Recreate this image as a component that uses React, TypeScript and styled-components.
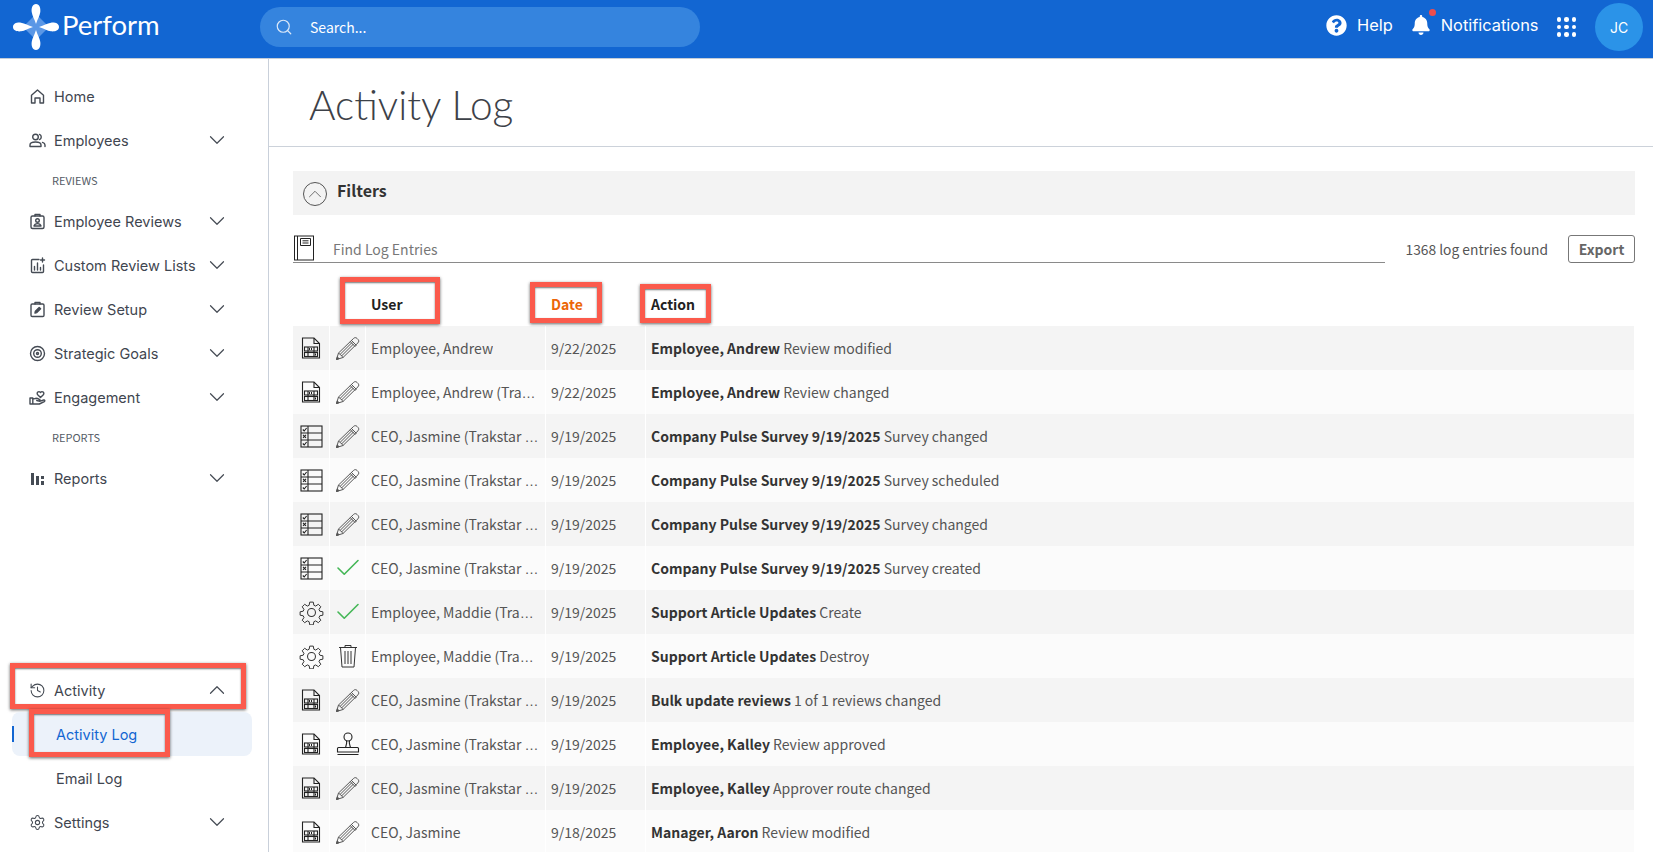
import React from "react";
import styled, { createGlobalStyle } from "styled-components";
import { ChevronDown, ChevronUp, History, Search, Settings, Check } from "lucide-react";
import { FaBell, FaQuestionCircle } from "react-icons/fa";

const GlobalStyle = createGlobalStyle`
  html, body {
    margin: 0;
    padding: 0;
    height: 852px;
    overflow: hidden;
    background: #fff;
  }
  * { box-sizing: border-box; }
`;

const BODY_FONT = `"Noto Sans CJK SC", "Open Sans", sans-serif`;
const NAV_FONT = `Inter, "Noto Sans", sans-serif`;

const Page = styled.div`
  width: 1653px;
  height: 852px;
  display: flex;
  flex-direction: column;
  overflow: hidden;
`;

const TopBar = styled.header`
  height: 59px;
  flex: none;
  background: #1266d2;
  border-bottom: 1px solid #c3ccd8;
  display: flex;
  align-items: center;
  padding: 0 10px 4px 13px;
  color: #fff;
  font-family: ${NAV_FONT};
`;

const Logo = styled.div`
  display: flex;
  align-items: center;
  width: 247px;
  gap: 3px;
`;

const LogoText = styled.span`
  font-family: Lato, sans-serif;
  font-size: 27.5px;
  font-weight: 400;
  margin-top: -5px;
`;

const SearchBox = styled.div`
  width: 440px;
  height: 40px;
  border-radius: 20px;
  background: #3584de;
  display: flex;
  align-items: center;
  gap: 17px;
  padding: 0 15px;
  font-family: ${BODY_FONT};
  font-size: 14px;
`;

const TopActions = styled.div`
  margin-left: auto;
  display: flex;
  align-items: center;
`;

const TopLink = styled.div`
  display: flex;
  align-items: center;
  gap: 10px;
  font-size: 16.4px;
  margin-right: 18px;
  margin-top: -4px;
`;

const BellWrap = styled.span`
  position: relative;
  display: flex;
  &::after {
    content: "";
    position: absolute;
    top: -6px;
    right: -5px;
    width: 7px;
    height: 7px;
    border-radius: 50%;
    background: #ee4d4d;
  }
`;

const Waffle = styled.div`
  display: grid;
  grid-template-columns: repeat(3, 4.5px);
  gap: 3px;
  margin-right: 19px;
`;

const Dot = styled.span`
  width: 4.5px;
  height: 4.5px;
  border-radius: 50%;
  background: #fff;
`;

const Avatar = styled.div`
  width: 48px;
  height: 48px;
  border-radius: 50%;
  background: #2b93e8;
  display: flex;
  align-items: center;
  justify-content: center;
  font-size: 14px;
`;

const Body = styled.div`
  flex: 1;
  display: flex;
  min-height: 0;
`;

const Sidebar = styled.nav`
  width: 269px;
  flex: none;
  border-right: 1px solid #c9d0da;
  display: flex;
  flex-direction: column;
  justify-content: space-between;
  padding: 15px 0 8px 12px;
  font-family: ${NAV_FONT};
`;

const NavGroup = styled.div`
  display: flex;
  flex-direction: column;
`;

const NavItem = styled.div`
  position: relative;
  height: 44px;
  width: 240px;
  display: flex;
  align-items: center;
  gap: 8px;
  padding: 0 22px 0 17px;
  font-size: 14.5px;
  color: #3f4650;
`;

const NavLabel = styled.span`
  flex: 1;
  white-space: nowrap;
`;

const NavSection = styled.div`
  height: 37px;
  padding: 10px 0 0 40px;
  font-family: ${BODY_FONT};
  font-size: 11px;
  color: #555c66;
`;

const SubItem = styled.div<{ $active?: boolean }>`
  position: relative;
  height: 44px;
  width: 240px;
  display: flex;
  align-items: center;
  padding-left: 44px;
  font-size: 14.5px;
  border-radius: 8px;
  color: ${(p) => (p.$active ? "#1266d2" : "#3f4650")};
  background: ${(p) => (p.$active ? "#ecf2fa" : "transparent")};
`;

const ActiveBar = styled.span`
  position: absolute;
  left: 0;
  top: 14px;
  width: 2px;
  height: 16px;
  background: #1266d2;
`;

const Callout = styled.span`
  position: absolute;
  border: 5px solid #fb5a4c;
  box-shadow: 0 1px 3px rgba(0, 0, 0, 0.6), inset 0 1px 2px rgba(0, 0, 0, 0.55);
  pointer-events: none;
`;

const ActivityCallout = styled(Callout)`
  left: -2px;
  top: -5px;
  width: 236px;
  height: 46px;
`;

const ActivityLogCallout = styled(Callout)`
  left: 17px;
  top: -3px;
  width: 141px;
  height: 48px;
`;

const UserCallout = styled(Callout)`
  left: -31px;
  top: -17px;
  width: 100px;
  height: 47px;
`;

const DateCallout = styled(Callout)`
  left: -21px;
  top: -12px;
  width: 72px;
  height: 41px;
`;

const ActionCallout = styled(Callout)`
  left: -11px;
  top: -10px;
  width: 71px;
  height: 39px;
`;

const Main = styled.main`
  flex: 1;
  min-width: 0;
  font-family: ${BODY_FONT};
  color: #444;
`;

const TitleBar = styled.div`
  height: 88px;
  border-bottom: 1px solid #ccd2da;
  padding: 19px 0 0 40px;
`;

const Title = styled.h1`
  margin: 0;
  font-family: Lato, sans-serif;
  font-weight: 300;
  font-size: 40.6px;
  line-height: 54px;
  color: #3d4148;
`;

const Content = styled.div`
  padding: 24px 18px 0 24px;
`;

const FiltersBar = styled.div`
  height: 44px;
  background: #f3f3f3;
  display: flex;
  align-items: center;
  gap: 10px;
  padding: 0 10px;
  font-weight: 700;
  font-size: 16px;
  color: #333;
`;

const FiltersLabel = styled.span`
  margin-top: -6px;
`;

const CircleToggle = styled.span`
  width: 24px;
  height: 24px;
  margin-top: 2px;
  border: 1px solid #555;
  border-radius: 50%;
  display: flex;
  align-items: center;
  justify-content: center;
`;

const FindRow = styled.div`
  margin-top: 20px;
  height: 28px;
  display: flex;
  align-items: stretch;
`;

const FindField = styled.div`
  flex: 1;
  display: flex;
  border-bottom: 1px solid #8a8a8a;
`;

const FindText = styled.span`
  margin-left: 18px;
  padding-top: 4px;
  font-size: 14px;
  line-height: 20px;
  color: #777;
`;

const FoundCount = styled.span`
  margin-left: 20px;
  padding-top: 1px;
  font-size: 13.8px;
  line-height: 26px;
  color: #555;
`;

const ExportButton = styled.button`
  margin-left: 20px;
  width: 67px;
  height: 28px;
  background: #fff;
  border: 1px solid #777;
  border-radius: 3px;
  font-family: ${BODY_FONT};
  font-weight: 700;
  font-size: 14px;
  color: #666;
  padding: 0;
`;

const columns = "37px 36px 180px 100px 1fr";

const HeadRow = styled.div`
  display: grid;
  grid-template-columns: ${columns};
  height: 63px;
  padding-top: 31px;
  font-weight: 700;
  font-size: 14px;
  line-height: 20px;
`;

const HeadCell = styled.div<{ $sorted?: boolean; $col: number }>`
  grid-column: ${(p) => p.$col};
  padding-left: 5px;
  color: ${(p) => (p.$sorted ? "#ec6608" : "#222")};
`;

const HeadLabel = styled.span`
  position: relative;
  display: inline-block;
`;

const LogRow = styled.div<{ $odd: boolean }>`
  display: grid;
  grid-template-columns: ${columns};
  height: 44px;
  background: ${(p) => (p.$odd ? "#f4f4f4" : "#fbfbfb")};
`;

const IconCell = styled.div`
  display: flex;
  align-items: center;
  justify-content: center;
  border-right: 1px solid #fff;
`;

const TextCell = styled.div`
  display: flex;
  align-items: center;
  padding: 0 5px;
  min-width: 0;
  font-size: 14px;
  color: #555;
  border-right: 1px solid #fff;
`;

const Clip = styled.span`
  overflow: hidden;
  white-space: nowrap;
`;

const Dots = styled.span`
  font-family: "Liberation Sans", sans-serif;
`;

const Strong = styled.b`
  font-weight: 700;
  color: #333;
`;

/* drawings */
const Petal = ({ angle }: { angle: number }) => (
  <path
    d="M23 0C26.500 0 27.800 4 27.300 8C26.800 12 24.500 15 23 20C21.500 15 19.200 12 18.700 8C18.200 4 19.500 0 23 0Z"
    transform={`rotate(${angle} 23 23)`}
    fill="#fff"
  />
);

const LogoMark = () => (
  <svg width="46" height="46" viewBox="0 0 46 46">
    <path d="M23 10 36 23 23 36 10 23Z" fill="#5a97e6" />
    <Petal angle={0} />
    <Petal angle={90} />
    <Petal angle={180} />
    <Petal angle={270} />
  </svg>
);

type NavIconName = "home" | "people" | "badge" | "chart" | "edit" | "target" | "hand" | "bars";

const NavIcon = ({ name }: { name: NavIconName }) => (
  <svg width="17" height="17" viewBox="0 0 17 17" fill="none" stroke="#454b54" strokeWidth="1.4" strokeLinecap="round" strokeLinejoin="round">
    {name === "home" && <path d="M2.500 7.200 8.500 2l6 5.200V15h-3.500v-5H6v5H2.500z" />}
    {name === "people" && (
      <>
        <circle cx="6.500" cy="5" r="2.800" />
        <path d="M1 14.500v-1.500c0-2 2.200-3 5.500-3s5.500 1 5.500 3v1.500z" />
        <path d="M10.500 2.400a2.800 2.800 0 0 1 0 5.200M13.500 10.400c1.600.5 2.500 1.400 2.500 2.600v1.500" />
      </>
    )}
    {name === "badge" && (
      <>
        <rect x="2" y="3" width="13" height="12.500" rx="1.500" />
        <path d="M6 3V1.500h5V3" />
        <circle cx="8.500" cy="7.500" r="1.800" />
        <path d="M5 13c.4-1.600 1.800-2.400 3.500-2.400S11.600 11.400 12 13z" />
      </>
    )}
    {name === "chart" && (
      <>
        <path d="M10 2.500H3.500a1 1 0 0 0-1 1v11a1 1 0 0 0 1 1h10a1 1 0 0 0 1-1V8" />
        <path d="M5.500 13V9.500M8.500 13V6M11.500 13v-2.500M13.500 1v4M11.500 3h4" />
      </>
    )}
    {name === "edit" && (
      <>
        <rect x="2" y="3" width="13" height="12.500" rx="1.200" />
        <path d="M6 3V1.500h5V3" />
        <path d="m6 12 .4-1.800 3.800-3.800 1.400 1.400-3.800 3.800z" fill="#454b54" />
      </>
    )}
    {name === "target" && (
      <>
        <circle cx="8.500" cy="8.500" r="7" />
        <circle cx="8.500" cy="8.500" r="3.800" />
        <circle cx="8.500" cy="8.500" r="1" />
      </>
    )}
    {name === "hand" && (
      <>
        <path d="M1 9h2.800v6H1zM3.800 10.200l3-.9c1 0 3.400 1 3.900 1.300.8.500.2 1.700-.8 1.400l-2.200-.5M10.500 12.400l4.200-1.400c1.200-.2 1.500 1 .6 1.600l-5 2.400H3.800" />
        <path d="M11.500 8.500 8.700 5.700c-1.700-2 1-4.200 2.800-2.200 1.800-2 4.500.2 2.800 2.200z" />
      </>
    )}
    {name === "bars" && (
      <g stroke="none" fill="#454b54">
        <rect x="2" y="3" width="3" height="12" />
        <rect x="7" y="6" width="3" height="9" />
        <rect x="12" y="6" width="3" height="3" />
        <rect x="12" y="11" width="3" height="4" />
      </g>
    )}
  </svg>
);

const BookIcon = () => (
  <svg width="22" height="26" viewBox="0 0 22 26" fill="none" stroke="#222" strokeWidth="1">
    <rect x="1.500" y="1" width="19" height="24" />
    <path d="M4.500 1v24M7.500 3.500h10v7h-10zM9.500 5.800h6M9.500 8h6" />
  </svg>
);

const DocIcon = () => (
  <svg width="20" height="22" viewBox="0 0 20 22" fill="none" stroke="#222" strokeWidth="1.100">
    <path d="M1.500 1h11.500l5.500 5.500V21H1.500z" />
    <path d="M13 1v5.500h5.500" />
    <rect x="3.500" y="10" width="13" height="4" />
    <rect x="3.500" y="15.500" width="13" height="4" />
    <path d="M7 10v9.500M13 10v9.500" />
    <path d="M8 12h4M14 17.500h2" strokeWidth="2" strokeDasharray="1 1" />
  </svg>
);

const ChecklistIcon = () => (
  <svg width="23" height="23" viewBox="0 0 23 23" fill="none" stroke="#222" strokeWidth="1.100">
    <rect x="1" y="1" width="21" height="21" />
    <path d="M1 8h21M1 15h21M8 1v21" />
    <path d="m2.800 4.500 1.400 1.500 2.400-3M2.800 18.500l1.400 1.500 2.400-3M3 9.800l3 3M6 9.800l-3 3" />
  </svg>
);

const GearIcon = () => (
  <svg width="25" height="25" viewBox="0 0 24 24" fill="none" stroke="#333" strokeWidth="1">
    <circle cx="12" cy="12" r="3.800" />
    <path d="M10.200 1.500h3.600l.6 3.200 1.800.8 2.700-1.800 2.500 2.500-1.800 2.700.8 1.800 3.100.6v3.400l-3.100.6-.8 1.800 1.800 2.700-2.500 2.500-2.700-1.800-1.800.8-.6 3.200h-3.600l-.6-3.200-1.800-.8-2.700 1.800-2.500-2.500 1.800-2.700-.8-1.800-3.100-.6v-3.400l3.100-.6.800-1.800-1.800-2.700 2.500-2.500 2.700 1.800 1.800-.8z" transform="translate(.6 .6) scale(.95)" />
  </svg>
);

const PencilIcon = () => (
  <svg width="25" height="25" viewBox="0 0 25 25" fill="none" stroke="#555" strokeWidth="1">
    <path d="M18.600 2.400c1-1 2.400-1 3.400 0l1 1c1 1 1 2.400 0 3.400L8 21.500 1.500 23.500l2-6.500z" />
    <path d="M16.500 4.500l5 5M15.300 5.700l5 5" />
    <path d="M5 18.500 17 6.500M6.500 20 18.500 8" />
    <path d="M3.500 17c1 .5 3.500 3 4.500 4.500" />
    <path d="M1.500 23.500l.8-2.600 1.800 1.800z" fill="#555" />
  </svg>
);

const TrashIcon = () => (
  <svg width="20" height="24" viewBox="0 0 20 24" fill="none" stroke="#333" strokeWidth="1">
    <path d="M1 3.500h18M7 3.500V1.500h6v2M2.500 3.500 4 23h12l1.500-19.500" />
    <path d="M7 7v13M10 7v13M13 7v13" />
  </svg>
);

const StampIcon = () => (
  <svg width="24" height="24" viewBox="0 0 24 24" fill="none" stroke="#222" strokeWidth="1.100">
    <circle cx="12" cy="5" r="4" />
    <path d="M10.500 8.700c.8 2-.2 4.300-1 6.800h5c-.8-2.500-1.800-4.800-1-6.800" />
    <path d="M2.500 15.500h19c.5 0 1 .5 1 1V20h-21v-3.500c0-.5.500-1 1-1zM1.500 22.500h21" />
  </svg>
);

type EntityIcon = "doc" | "list" | "gear";
type ActionIcon = "edit" | "check" | "trash" | "stamp";

const entityIcons = { doc: <DocIcon />, list: <ChecklistIcon />, gear: <GearIcon /> };
const actionIcons = {
  edit: <PencilIcon />,
  check: <Check size={30} strokeWidth={1.3} color="#45b757" />,
  trash: <TrashIcon />,
  stamp: <StampIcon />,
};

type LogEntry = {
  entity: EntityIcon;
  action: ActionIcon;
  user: string;
  cut?: boolean;
  date: string;
  subject: string;
  detail: string;
};

const jasmine = { user: "CEO, Jasmine (Trakstar ", cut: true };
const maddie = { user: "Employee, Maddie (Tra", cut: true };
const pulse = "Company Pulse Survey 9/19/2025";

const entries: LogEntry[] = [
  { entity: "doc", action: "edit", user: "Employee, Andrew", date: "9/22/2025", subject: "Employee, Andrew", detail: "Review modified" },
  { entity: "doc", action: "edit", user: "Employee, Andrew (Tra", cut: true, date: "9/22/2025", subject: "Employee, Andrew", detail: "Review changed" },
  { entity: "list", action: "edit", ...jasmine, date: "9/19/2025", subject: pulse, detail: "Survey changed" },
  { entity: "list", action: "edit", ...jasmine, date: "9/19/2025", subject: pulse, detail: "Survey scheduled" },
  { entity: "list", action: "edit", ...jasmine, date: "9/19/2025", subject: pulse, detail: "Survey changed" },
  { entity: "list", action: "check", ...jasmine, date: "9/19/2025", subject: pulse, detail: "Survey created" },
  { entity: "gear", action: "check", ...maddie, date: "9/19/2025", subject: "Support Article Updates", detail: "Create" },
  { entity: "gear", action: "trash", ...maddie, date: "9/19/2025", subject: "Support Article Updates", detail: "Destroy" },
  { entity: "doc", action: "edit", ...jasmine, date: "9/19/2025", subject: "Bulk update reviews", detail: "1 of 1 reviews changed" },
  { entity: "doc", action: "stamp", ...jasmine, date: "9/19/2025", subject: "Employee, Kalley", detail: "Review approved" },
  { entity: "doc", action: "edit", ...jasmine, date: "9/19/2025", subject: "Employee, Kalley", detail: "Approver route changed" },
  { entity: "doc", action: "edit", user: "CEO, Jasmine", date: "9/18/2025", subject: "Manager, Aaron", detail: "Review modified" },
];

const NavRow = ({ icon, label }: { icon: NavIconName; label: string }) => (
  <NavItem>
    <NavIcon name={icon} />
    <NavLabel>{label}</NavLabel>
    {icon !== "home" && <ChevronDown size={26} strokeWidth={1.1} color="#454b54" />}
  </NavItem>
);

const App = () => {
  return (
    <Page>
      <GlobalStyle />
      <TopBar>
        <Logo>
          <LogoMark />
          <LogoText>Perform</LogoText>
        </Logo>
        <SearchBox>
          <Search size={18} strokeWidth={1.6} color="#dbe8f8" />
          Search...
        </SearchBox>
        <TopActions>
          <TopLink>
            <FaQuestionCircle size={21} />
            Help
          </TopLink>
          <TopLink>
            <BellWrap>
              <FaBell size={20} />
            </BellWrap>
            Notifications
          </TopLink>
          <Waffle>
            {Array.from({ length: 9 }).map((_, i) => (
              <Dot key={i} />
            ))}
          </Waffle>
          <Avatar>JC</Avatar>
        </TopActions>
      </TopBar>
      <Body>
        <Sidebar>
          <NavGroup>
            <NavRow icon="home" label="Home" />
            <NavRow icon="people" label="Employees" />
            <NavSection>REVIEWS</NavSection>
            <NavRow icon="badge" label="Employee Reviews" />
            <NavRow icon="chart" label="Custom Review Lists" />
            <NavRow icon="edit" label="Review Setup" />
            <NavRow icon="target" label="Strategic Goals" />
            <NavRow icon="hand" label="Engagement" />
            <NavSection>REPORTS</NavSection>
            <NavRow icon="bars" label="Reports" />
          </NavGroup>
          <NavGroup>
            <NavItem>
              <History size={17} strokeWidth={1.5} color="#454b54" />
              <NavLabel>Activity</NavLabel>
              <ChevronUp size={26} strokeWidth={1.1} color="#454b54" />
              <ActivityCallout />
            </NavItem>
            <SubItem $active>
              <ActiveBar />
              Activity Log
              <ActivityLogCallout />
            </SubItem>
            <SubItem>Email Log</SubItem>
            <NavItem>
              <Settings size={17} strokeWidth={1.5} color="#454b54" />
              <NavLabel>Settings</NavLabel>
              <ChevronDown size={26} strokeWidth={1.1} color="#454b54" />
            </NavItem>
          </NavGroup>
        </Sidebar>
        <Main>
          <TitleBar>
            <Title>Activity Log</Title>
          </TitleBar>
          <Content>
            <FiltersBar>
              <CircleToggle>
                <ChevronUp size={22} strokeWidth={0.9} color="#555" />
              </CircleToggle>
              <FiltersLabel>Filters</FiltersLabel>
            </FiltersBar>
            <FindRow>
              <FindField>
                <BookIcon />
                <FindText>Find Log Entries</FindText>
              </FindField>
              <FoundCount>1368 log entries found</FoundCount>
              <ExportButton>Export</ExportButton>
            </FindRow>
            <HeadRow>
              <HeadCell $col={3}>
                <HeadLabel>
                  User
                  <UserCallout />
                </HeadLabel>
              </HeadCell>
              <HeadCell $col={4} $sorted>
                <HeadLabel>
                  Date
                  <DateCallout />
                </HeadLabel>
              </HeadCell>
              <HeadCell $col={5}>
                <HeadLabel>
                  Action
                  <ActionCallout />
                </HeadLabel>
              </HeadCell>
            </HeadRow>
            {entries.map((entry, i) => (
              <LogRow key={i} $odd={i % 2 === 0}>
                <IconCell>{entityIcons[entry.entity]}</IconCell>
                <IconCell>{actionIcons[entry.action]}</IconCell>
                <TextCell>
                  <Clip>
                    {entry.user}
                    {entry.cut && <Dots>…</Dots>}
                  </Clip>
                </TextCell>
                <TextCell>{entry.date}</TextCell>
                <TextCell>
                  <Clip>
                    <Strong>{entry.subject}</Strong> {entry.detail}
                  </Clip>
                </TextCell>
              </LogRow>
            ))}
          </Content>
        </Main>
      </Body>
    </Page>
  );
};

export default App;
